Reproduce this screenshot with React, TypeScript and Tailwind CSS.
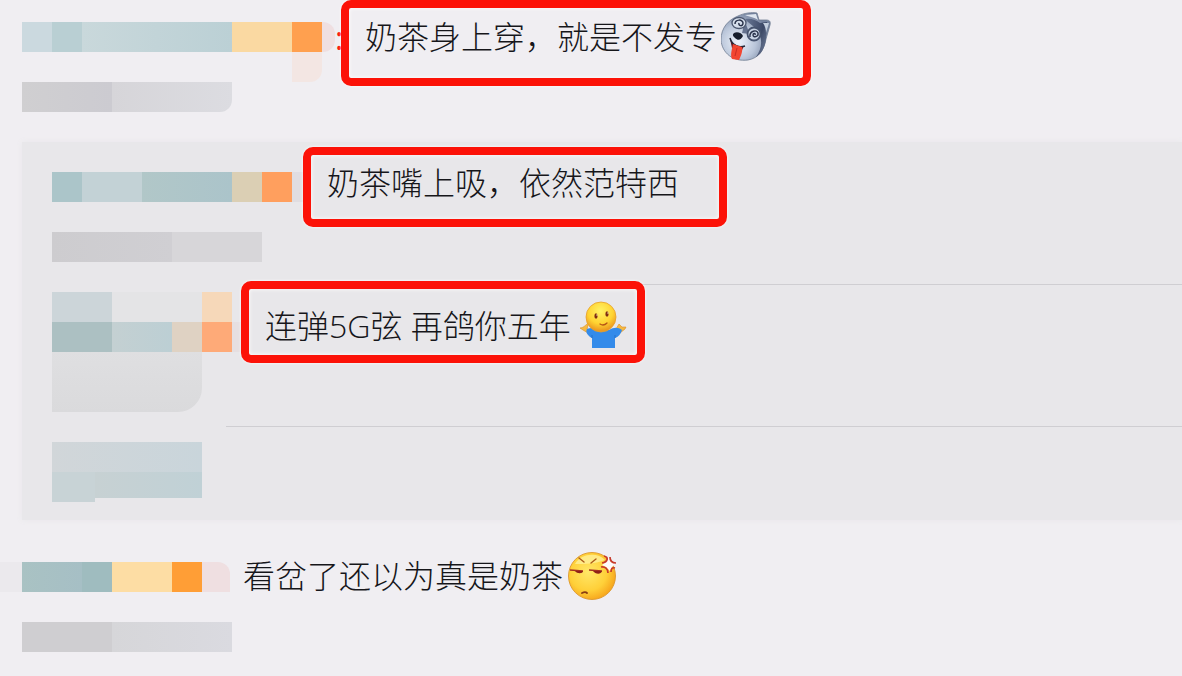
import type { ReactNode } from 'react';
import { clsx } from 'clsx';

/** Dizzy husky with its tongue out */
function HuskyEmoji() {
  return (
    <svg className="ml-1 size-[50px] shrink-0" viewBox="0 0 50 50" role="img" aria-label="二哈">
      <defs>
        <radialGradient id="husky" cx="35%" cy="62%" r="65%">
          <stop offset="0" stopColor="#eef3fb" />
          <stop offset="0.55" stopColor="#b9c5d9" />
          <stop offset="1" stopColor="#73819d" />
        </radialGradient>
        <linearGradient id="husky-fur" x1="0" y1="0" x2="1" y2="0.6">
          <stop offset="0" stopColor="#5f6e8c" />
          <stop offset="0.7" stopColor="#2f3b5a" />
          <stop offset="1" stopColor="#5d6a88" />
        </linearGradient>
      </defs>
      <path d="M17 4C23 1 31 0 36 1L38 8L45 8C48 8 50 9 49 13L45 27C43 38 38 46 27 48C12 50 1 41 0 28C0 16 7 8 17 4Z" fill="url(#husky)" stroke="#6f7c92" strokeWidth="0.8" />
      <path d="M24 7C30 6 35 8 39 11L46 10C47 16 45 23 45 27C44 36 40 42 35 45C40 38 42 30 38 21C34 14 28 12 24 7Z" fill="url(#husky-fur)" opacity="0.85" />
      <path d="M24 3L35 2L37 8C33 5 29 5 24 3Z" fill="#dfe6f0" />
      <path d="M42 11L48 11L45 21C45 17 44 14 42 11Z" fill="#c3cede" />
      <path d="M22 5C24 11 27 15 28 22L21 21C23 16 22 10 22 5Z" fill="#4c5a79" opacity="0.8" />
      <ellipse cx="18" cy="11" rx="7" ry="5.5" fill="#d5deeb" stroke="#4d5870" strokeWidth="1.3" />
      <path d="M14 12C14 7 22 7 22 11C22 15 17 14 18 11" fill="none" stroke="#29324a" strokeWidth="1.5" />
      <circle cx="33" cy="22" r="6.5" fill="#c9d4e4" stroke="#46536e" strokeWidth="1.8" />
      <path d="M29 25C28 19 36 17 37 21C38 25 32 26 32 23C32 21 35 21 34 23" fill="none" stroke="#29324a" strokeWidth="1.4" />
      <path d="M13 21C16 19 21 21 22 24C20 28 17 29 14 26C12 24 11 23 13 21Z" fill="#161d2c" />
      <path d="M9 27C11 32 17 35 23 34L21 38L11 36Z" fill="#6c1820" />
      <path d="M9 26C11 33 17 36 24 34" fill="none" stroke="#222838" strokeWidth="1.5" />
      <path d="M12 32L21 35C22 39 20 44 18 48L11 47C9 43 11 37 12 32Z" fill="#f24631" />
      <path d="M16 36L14 44" stroke="#c92d24" strokeWidth="1" />
    </svg>
  );
}

/** Shrugging figure in a blue shirt */
function ShrugEmoji() {
  return (
    <svg className="ml-2 size-[50px] shrink-0" viewBox="0 0 50 50" role="img" aria-label="摊手">
      <defs>
        <radialGradient id="shrug" cx="48%" cy="30%" r="65%">
          <stop offset="0" stopColor="#fff263" />
          <stop offset="0.65" stopColor="#ffd332" />
          <stop offset="1" stopColor="#ed9b20" />
        </radialGradient>
      </defs>
      <path d="M1 27C4 27 7 24 10 21L8 28L12 29L9 32L4 29Z" fill="#f5b943" stroke="#d98d25" strokeWidth="0.6" />
      <path d="M37 28L40 23L43 26L47 26L46 28L41 32Z" fill="#f5b943" stroke="#d98d25" strokeWidth="0.6" />
      <path d="M8 28C12 26 16 27 20 29H30C35 26 39 26 43 29C42 33 39 36 36 37V47H13V37C9 35 6 31 8 28Z" fill="#348bea" />
      <path d="M13 37V34M36 37V34" stroke="#2471cb" strokeWidth="1" />
      <circle cx="22" cy="16" r="15" fill="url(#shrug)" stroke="#e6a02b" strokeWidth="0.8" />
      <ellipse cx="17" cy="15" rx="1.6" ry="2.7" fill="#7e2c12" />
      <ellipse cx="28" cy="13" rx="1.6" ry="2.7" fill="#7e2c12" />
      <path d="M17 14H19M28 12H30" stroke="#fff3ad" strokeWidth="0.8" />
      <path d="M21 23C24 25 26 24 28 22" fill="none" stroke="#b65416" strokeWidth="1.3" strokeLinecap="round" />
    </svg>
  );
}

/** Annoyed face with a popped vein */
function AnnoyedEmoji() {
  return (
    <svg className="ml-1 size-[50px] shrink-0" viewBox="0 0 50 50" role="img" aria-label="生气">
      <defs>
        <radialGradient id="annoyed" cx="42%" cy="42%" r="60%">
          <stop offset="0" stopColor="#ffe768" />
          <stop offset="0.65" stopColor="#ffd039" />
          <stop offset="1" stopColor="#f7a71d" />
        </radialGradient>
      </defs>
      <circle cx="25" cy="25" r="23.5" fill="url(#annoyed)" stroke="#dc972d" strokeWidth="0.9" />
      <path d="M8 13C14 2 31 1 38 9C29 13 17 13 8 13Z" fill="#fff4a4" opacity="0.7" />
      <path d="M12 7L17 11M29 8L24 12" stroke="#ad5b19" strokeWidth="1.4" strokeLinecap="round" />
      <path d="M3 19L16 20M22 19L35 20" stroke="#a5301f" strokeWidth="1.4" />
      <path d="M8 20H16C16 23 10 23 8 20ZM26 20H35C34 24 28 23 26 20Z" fill="#8e2019" />
      <path d="M15 42C17 41 19 41 20 42" fill="none" stroke="#8a3d12" strokeWidth="1.8" strokeLinecap="round" />
      <path d="M41 6L44 11L48 13L45 16L43 20L39 16L35 14L39 11Z" fill="#fffafa" />
      <path d="M37 5C42 6 41 11 35 12M43 6C43 10 45 12 49 12M34 16C38 15 41 18 41 22M48 17C45 16 44 18 44 21" fill="none" stroke="#c73a2b" strokeWidth="1.7" />
    </svg>
  );
}

/** A strip of mosaic tiles, one class string for each tile */
function Strip({ tiles }: { tiles: string[] }) {
  return (
    <div className="flex h-[30px]">
      {tiles.map((tile, i) => (
        <span key={i} className={clsx('h-[30px] shrink-0', tile)} />
      ))}
    </div>
  );
}

function Marked({ className, children }: { className: string; children: ReactNode }) {
  return (
    <p
      className={clsx(
        'relative flex shrink-0 items-center rounded-[10px] border-8 border-[#fc1208] pl-4 leading-[48px] whitespace-nowrap shadow-[0_0_3px_#fff,inset_0_0_4px_#fff]',
        className,
      )}
    >
      {children}
    </p>
  );
}

export default function App() {
  return (
    <main
      lang="zh-CN"
      className="min-h-screen overflow-hidden bg-[#f0eef2] font-['Open_Sans','Noto_Sans_CJK_SC_Light','Noto_Sans_CJK_SC',sans-serif] text-[32px] font-light text-[#16161a]"
    >
      <article className="flex h-[142px] items-start">
        <div className="w-[335px] shrink-0 pt-[22px] pl-[22px]">
          <Strip
            tiles={[
              'w-[30px] bg-[#cbd9df]',
              'w-[30px] bg-[#b9cfd3]',
              'w-[150px] bg-linear-to-r from-[#c9d8db] to-[#bbd0d5]',
              'w-[60px] bg-[#fad9a2]',
              'w-[30px] bg-[#ffa04f]',
              'w-[13px] rounded-r-xl bg-[#efdfe1]',
            ]}
          />
          <Strip tiles={['w-[270px]', 'w-[30px] rounded-br-xl bg-[#f3e6e3]']} />
          <Strip
            tiles={[
              'w-[90px] bg-linear-to-r from-[#d0cfd1] to-[#cccbd1]',
              'w-[120px] rounded-br-xl bg-linear-to-r from-[#d6d5d9] to-[#dcdce1]',
            ]}
          />
        </div>
        <span className="w-[6px] shrink-0 pt-[14px] leading-[48px] font-normal text-[#fc1208]">:</span>
        <Marked className="pt-1 pr-8 pb-4">
          奶茶身上穿，就是不发专
          <HuskyEmoji />
        </Marked>
      </article>

      <section className="ml-[22px] bg-[#e8e7ea] shadow-[0_0_6px_#e8e7ea]">
        <article className="flex h-[142px] items-start">
          <div className="w-[281px] shrink-0 pt-[30px] pl-[30px]">
            <Strip
              tiles={[
                'w-[30px] bg-[#abc5c9]',
                'w-[60px] bg-[#c3d2d6]',
                'w-[90px] bg-linear-to-r from-[#b1c7c8] to-[#abc4ca]',
                'w-[30px] bg-[#dbcfb4]',
                'w-[30px] bg-[#ff9f5e]',
                'w-[11px] bg-[#e0dde1]',
              ]}
            />
            <div className="pt-[30px]">
              <Strip
                tiles={[
                  'w-[120px] bg-linear-to-r from-[#cdcccf] to-[#d0cfd3]',
                  'w-[90px] bg-[#d7d6d9]',
                ]}
              />
            </div>
          </div>
          <Marked className="mt-[5px] pt-1 pr-10 pb-3">奶茶嘴上吸，依然范特西</Marked>
        </article>

        <hr className="ml-[226px] border-[#cfced2]" />
        <article className="flex h-[141px] items-start">
          <div className="w-[219px] shrink-0 pt-[7px] pl-[30px]">
            <Strip tiles={['w-[60px] bg-[#ccd5d9]', 'w-[90px] bg-[#e4e4e6]', 'w-[30px] bg-[#f6d8b9]']} />
            <Strip
              tiles={[
                'w-[60px] bg-[#acc0c2]',
                'w-[60px] bg-linear-to-r from-[#c4d0d2] to-[#bccfd4]',
                'w-[30px] bg-[#dfd2c3]',
                'w-[30px] bg-[#feaa78]',
                'w-[9px] bg-[#e6dfe1]',
              ]}
            />
            <div className="h-[60px] w-[150px] rounded-br-3xl bg-linear-to-b from-[#dfdfe1] to-[#dadadc]" />
          </div>
          <Marked className="-mt-1 pt-3 pr-2 pb-1">
            连弹5G弦 再鸽你五年
            <ShrugEmoji />
          </Marked>
        </article>

        <hr className="ml-[204px] border-[#cfced2]" />
        <article className="h-[93px] pt-[15px] pl-[30px]">
          <Strip tiles={['w-[150px] bg-linear-to-r from-[#d1d6d9] to-[#c9d5db]']} />
          <div className="flex items-start">
            <span className="h-[30px] w-[43px] bg-[#c8d3d6]" />
            <span className="h-[26px] w-[107px] bg-linear-to-r from-[#c7d1d3] to-[#c0d1d6]" />
          </div>
        </article>
      </section>

      <article className="flex items-start">
        <div className="flex shrink-0 pt-[42px]">
          <span className="h-[30px] w-[22px] bg-[#ebe9ed]" />
          <div className="w-[221px]">
            <Strip
              tiles={[
                'w-[60px] bg-linear-to-r from-[#a9c2c3] to-[#a6bfc5]',
                'w-[30px] bg-[#9fbcbf]',
                'w-[60px] bg-[#fddda4]',
                'w-[30px] bg-[#ff9e36]',
                'w-[28px] rounded-tr-xl bg-[#efdfe1]',
              ]}
            />
            <div className="pt-[30px]">
              <Strip
                tiles={[
                  'w-[90px] bg-[#cfced1]',
                  'w-[120px] bg-linear-to-r from-[#d6d6d9] to-[#dadae0]',
                ]}
              />
            </div>
          </div>
        </div>
        <p className="flex items-center pt-[31px] leading-[48px] whitespace-nowrap">
          看岔了还以为真是奶茶
          <AnnoyedEmoji />
        </p>
      </article>
    </main>
  );
}
